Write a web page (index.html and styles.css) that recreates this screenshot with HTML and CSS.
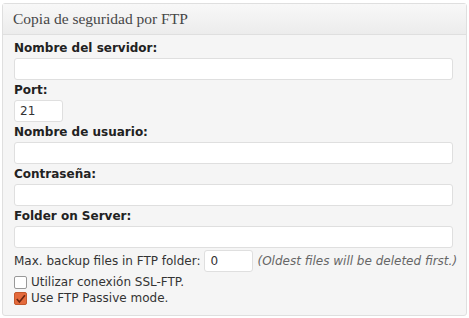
FILE: index.html
```html
<!DOCTYPE html>
<html>
	<head>
		<meta charset="UTF-8">
		<title>FTP</title>
		<link rel="stylesheet" href="styles.css">
	</head>
	<body>
		<div class="postbox">
			<h3 class="hndle">Copia de seguridad por FTP</h3>
			<div class="inside">
				<b>Nombre del servidor:</b>
				<input type="text" class="large">
				<b>Port:</b>
				<input type="text" class="small" value="21">
				<b>Nombre de usuario:</b>
				<input type="text" class="large">
				<b>Contraseña:</b>
				<input type="password" class="large">
				<b>Folder on Server:</b>
				<input type="text" class="large">
				<div class="row">
					<span>Max. backup files in FTP folder:</span>
					<input type="text" class="small" value="0">
					<span class="desc">(Oldest files will be deleted first.)</span>
				</div>
				<label class="check"><span class="box"></span>Utilizar conexión SSL-FTP.</label>
				<label class="check"><span class="box on"><svg width="12" height="12" viewBox="0 0 12 12"><path d="M2 6 L4.8 9.2 L10.8 2" fill="none" stroke="#6b2610" stroke-width="1.8"/></svg></span>Use FTP Passive mode.</label>
			</div>
		</div>
	</body>
</html>
```

FILE: styles.css
```css
body {
	margin: 0;
	padding: 3px 2px 0 2px;
	background-color: white;
	font: 12px "DejaVu Sans", sans-serif;
	color: #333;
}
.postbox {
	width: 465px;
	height: 313px;
	border: 1px solid #dfdfdf;
	border-radius: 3px;
	background-color: #f5f5f5;
	box-sizing: border-box;
}
.hndle {
	margin: 0;
	height: 30px;
	padding: 0 10px;
	font: 15.5px/30px "Liberation Serif", serif;
	font-weight: normal;
	color: #464646;
	background: linear-gradient(#f8f8f8, #ececec);
	border-bottom: 1px solid #dfdfdf;
}
.inside {
	padding: 3px 11px 0 11px;
	display: flex;
	flex-direction: column;
	align-items: flex-start;
}
.inside b {
	display: block;
	height: 20px;
	line-height: 20px;
	color: #222;
}
input {
	box-sizing: border-box;
	height: 22px;
	border: 1px solid #dfdfdf;
	border-radius: 3px;
	background-color: white;
	font: 12px "DejaVu Sans", sans-serif;
	color: #333;
	padding: 0 5px;
	margin: 0;
}
.large {
	width: 439px;
}
.small {
	width: 49px;
}
.row {
	height: 26px;
	display: flex;
	align-items: center;
	gap: 4px;
	white-space: nowrap;
}
.desc {
	font-style: italic;
	color: #666;
}
.check {
	display: flex;
	align-items: center;
	height: 16px;
	gap: 4px;
}
.box {
	width: 11px;
	height: 11px;
	border: 1px solid #999;
	border-radius: 2px;
	background-color: white;
	display: flex;
}
.box.on {
	background-color: #e46a3c;
	border-color: #c4582c;
}
```
